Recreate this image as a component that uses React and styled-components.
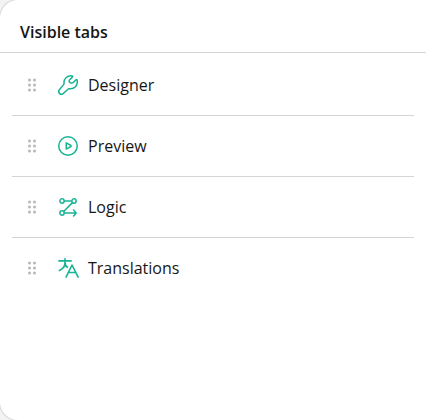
import React from "react";
import styled, { createGlobalStyle } from "styled-components";

const GlobalStyle = createGlobalStyle`
  *, *::before, *::after { box-sizing: border-box; }
  html, body { margin: 0; background: #f3f3f3; }
  body { font-family: "Open Sans", "Noto Sans", sans-serif; font-size: 16px; color: #161616; }
`;

const Panel = styled.section`
  height: 420px;
  border-radius: 18px 0 0 18px;
  background: #fff;
  box-shadow: 0 0 0 1px #d6d6d6;
`;

const Header = styled.header`
  height: 53px;
  padding: 20px 20px 0;
  border-bottom: 1px solid #d4d4d4;
`;

const Title = styled.h2`
  margin: 0;
  font-size: 16px;
  font-weight: 600;
  line-height: 24px;
`;

const TabList = styled.ul`
  margin: 0 12px;
  padding: 2px 0 0;
  list-style: none;
`;

const TabRow = styled.li`
  display: flex;
  align-items: center;
  height: 61px;
  padding: 0 8px;
  border-bottom: 1px solid ${(p) => (p.$last ? "transparent" : "#d4d4d4")};
`;

const DragHandle = styled.svg`
  width: 24px;
  height: 24px;
  margin-right: 12px;
  fill: #b8b8b8;
`;

const TabIcon = styled.svg`
  width: 24px;
  height: 24px;
  margin-right: 8px;
  fill: none;
  stroke: #19b394;
  stroke-width: 1.5;
  stroke-linejoin: round;
`;

const Label = styled.span`
  line-height: 24px;
`;

const icons = {
  designer: (
    <path d="M20 6.8 17.5 9.3C16.2 10.6 13.1 10.2 13.1 8.3 13.1 7.6 13.4 7 13.9 6.5L16.3 4.1C17.1 3.3 16.5 2.75 15.1 2.75 11 2.75 8 5.7 8 9.3V11.1L3.4 16.8C2.5 17.9 2.5 19.4 3.5 20.4 4.5 21.4 6 21.5 7.1 20.6L12.6 15.8H14.6C18.6 15.8 21.3 12.8 21.3 8.9 21.3 6.8 20.9 5.9 20 6.8Z" />
  ),
  preview: (
    <>
      <circle cx="12" cy="12" r="9.25" />
      <path d="M10.25 8.9v6.2L15 12.5v-1Z" />
    </>
  ),
  logic: (
    <>
      <circle cx="6" cy="6" r="2.15" />
      <circle cx="18" cy="6" r="2.15" />
      <circle cx="6" cy="18" r="2.15" />
      <path d="M8.15 6h7.7M16.5 7.6 7.6 16.5M8.15 18h12M17.2 14.6l3 3.4-3 3.4" />
    </>
  ),
  translations: (
    <path d="M2.3 4.9h13.4M9 2.2v5M9 4.8V6.5C9 10.3 6.5 13.4 2.7 14.7M9 6.5C9 8.8 10.2 10.9 12 11.6M9.8 21.7 16 9 22.4 21.7M11.9 16.5h8.2" strokeWidth="1.65" />
  ),
};

const tabs = [
  { id: "designer", title: "Designer" },
  { id: "preview", title: "Preview" },
  { id: "logic", title: "Logic" },
  { id: "translations", title: "Translations" },
];

const dots = [7, 12, 17].flatMap((y) => [9.5, 14.5].map((x) => [x, y]));

export default function App() {
  return (
    <>
      <GlobalStyle />
      <Panel>
        <Header>
          <Title>Visible tabs</Title>
        </Header>
        <TabList>
          {tabs.map((tab, i) => (
            <TabRow key={tab.id} $last={i === tabs.length - 1}>
              <DragHandle viewBox="0 0 24 24">
                {dots.map(([x, y]) => (
                  <circle key={`${x}-${y}`} cx={x} cy={y} r="1.5" />
                ))}
              </DragHandle>
              <TabIcon viewBox="0 0 24 24">{icons[tab.id]}</TabIcon>
              <Label>{tab.title}</Label>
            </TabRow>
          ))}
        </TabList>
      </Panel>
    </>
  );
}
